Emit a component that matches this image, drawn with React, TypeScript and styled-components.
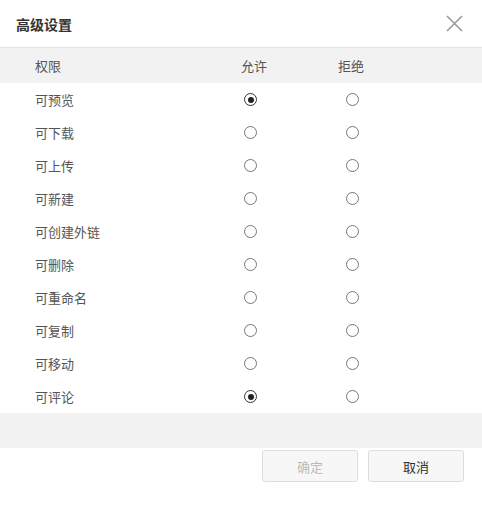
import React from "react";
import styled, { createGlobalStyle } from "styled-components";

const Global = createGlobalStyle`
  html, body { margin: 0; padding: 0; background: #fff; }
  body { font-family: "Microsoft YaHei", "Noto Sans CJK SC", "Noto Sans", sans-serif; }
`;

const Dialog = styled.div`
  width: 482px;
  background: #fff;
`;

const Header = styled.div`
  height: 47px;
  border-bottom: 1px solid #e2e2e2;
  display: flex;
  align-items: center;
  justify-content: space-between;
  padding: 0 19px 0 16px;
  box-sizing: content-box;
`;

const Title = styled.div`
  font-size: 14px;
  font-weight: bold;
  color: #333;
`;

const Close = styled.button`
  border: 0;
  background: none;
  padding: 0;
  width: 18px;
  height: 18px;
  display: flex;
  align-items: center;
  justify-content: center;
  cursor: pointer;
`;

const Row = styled.div<{ $head?: boolean }>`
  display: grid;
  grid-template-columns: 206px 97px 1fr;
  align-items: center;
  height: ${(p) => (p.$head ? 35 : 33)}px;
  padding-left: 35px;
  background: ${(p) => (p.$head ? "#f2f2f2" : "#fff")};
  font-size: 13px;
  color: #555;
`;

const Cell = styled.div<{ $indent?: number }>`
  display: flex;
  align-items: center;
  padding-left: ${(p) => p.$indent ?? 0}px;
`;

const Radio = styled.span<{ $checked?: boolean }>`
  width: 13px;
  height: 13px;
  box-sizing: border-box;
  border-radius: 50%;
  border: 1px solid ${(p) => (p.$checked ? "#333" : "#777")};
  display: flex;
  align-items: center;
  justify-content: center;
  &::after {
    content: "";
    display: ${(p) => (p.$checked ? "block" : "none")};
    width: 6px;
    height: 6px;
    border-radius: 50%;
    background: #222;
  }
`;

const Band = styled.div`
  height: 35px;
  background: #f2f2f2;
`;

const Footer = styled.div`
  display: flex;
  justify-content: flex-end;
  gap: 10px;
  padding: 2px 18px 0 0;
`;

const Button = styled.button<{ $disabled?: boolean }>`
  width: 96px;
  height: 32px;
  border: 1px solid #ddd;
  border-radius: 3px;
  background: #f7f7f7;
  font-family: inherit;
  font-size: 13px;
  color: ${(p) => (p.$disabled ? "#bbb" : "#333")};
  cursor: ${(p) => (p.$disabled ? "default" : "pointer")};
`;

const perms: [string, boolean][] = [
  ["可预览", true],
  ["可下载", false],
  ["可上传", false],
  ["可新建", false],
  ["可创建外链", false],
  ["可删除", false],
  ["可重命名", false],
  ["可复制", false],
  ["可移动", false],
  ["可评论", true],
];

export default function App() {
  return (
    <Dialog>
      <Global />
      <Header>
        <Title>高级设置</Title>
        <Close aria-label="close">
          <svg width="17" height="17" viewBox="0 0 17 17">
            <path d="M1 1L16 16M16 1L1 16" stroke="#9a9a9a" strokeWidth="1.6" fill="none" />
          </svg>
        </Close>
      </Header>
      <Row $head>
        <Cell>权限</Cell>
        <Cell>允许</Cell>
        <Cell>拒绝</Cell>
      </Row>
      {perms.map(([label, allow]) => (
        <Row key={label}>
          <Cell>{label}</Cell>
          <Cell $indent={3}>
            <Radio $checked={allow} />
          </Cell>
          <Cell $indent={8}>
            <Radio $checked={false} />
          </Cell>
        </Row>
      ))}
      <Band />
      <Footer>
        <Button $disabled>确定</Button>
        <Button>取消</Button>
      </Footer>
    </Dialog>
  );
}
